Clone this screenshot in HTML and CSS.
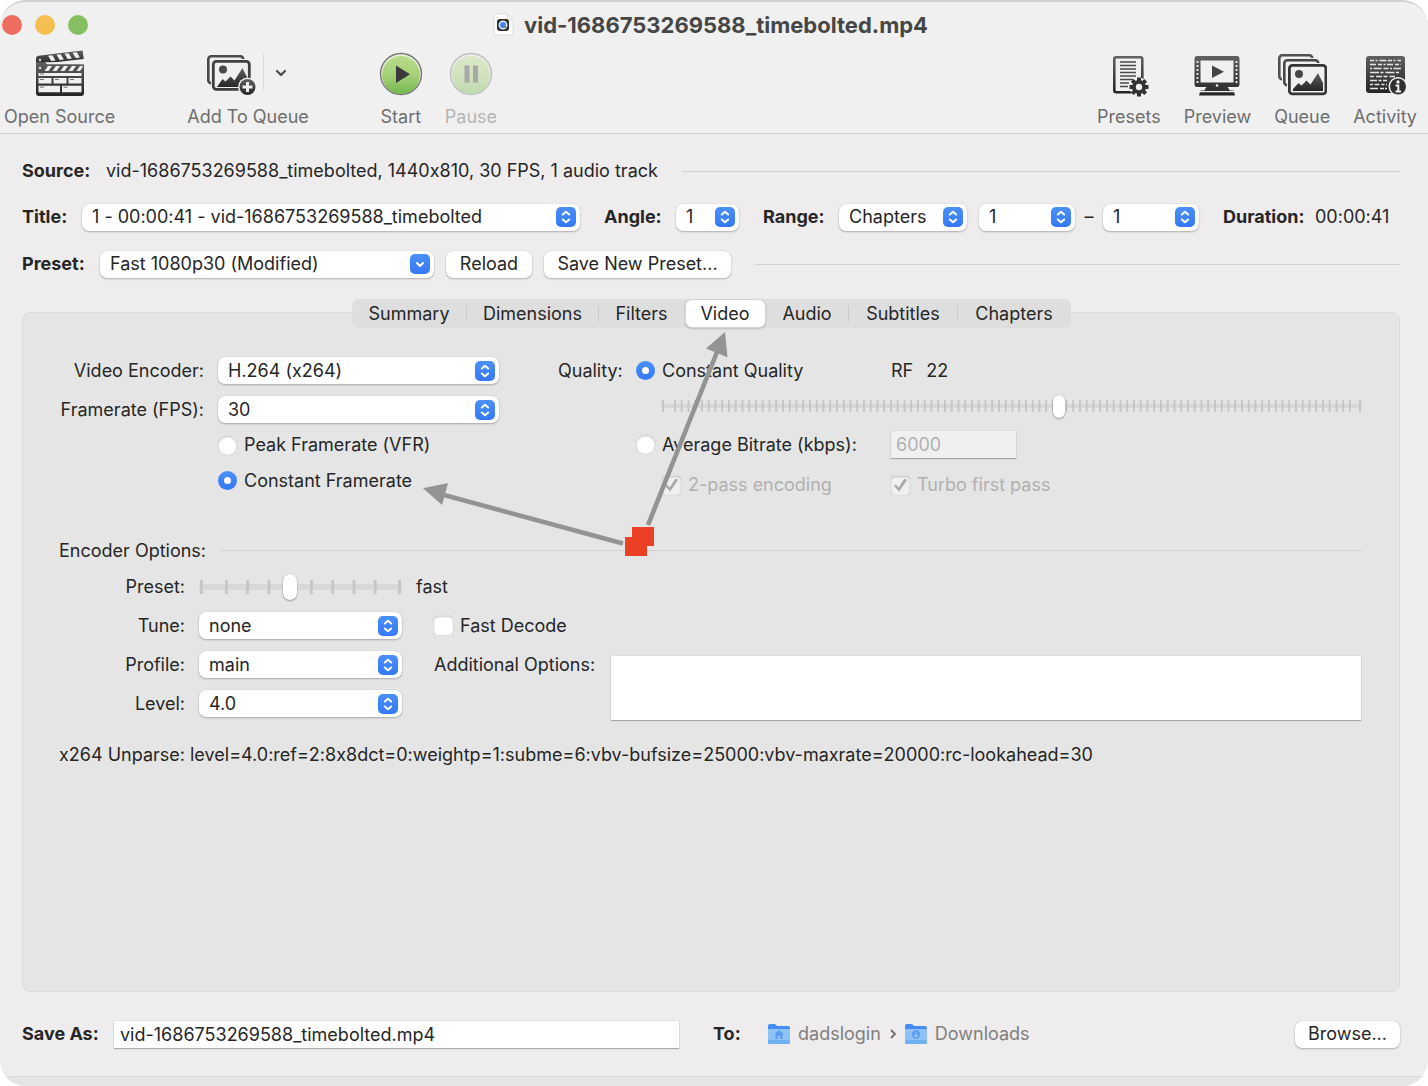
FILE: index.html
```html
<!DOCTYPE html>
<html lang="en">
<head>
<meta charset="utf-8">
<meta name="viewport" content="width=device-width, initial-scale=1">
<title>vid-1686753269588_timebolted.mp4</title>
<link rel="stylesheet" href="styles.css">
</head>
<body>
<svg class="defs" aria-hidden="true">
  <defs>
    <linearGradient id="ink" x1="0" y1="0" x2="0" y2="1"><stop offset="0" stop-color="#606060"/><stop offset="1" stop-color="#252525"/></linearGradient>
    <linearGradient id="green" x1="0" y1="0" x2="0" y2="1"><stop offset="0" stop-color="#b9dc8b"/><stop offset=".5" stop-color="#a6d077"/><stop offset="1" stop-color="#74b84e"/></linearGradient>
    <linearGradient id="blue" x1="0" y1="0" x2="0" y2="1"><stop offset="0" stop-color="#4a90f7"/><stop offset="1" stop-color="#3478f6"/></linearGradient>
    <symbol id="updown" viewBox="0 0 20 20"><rect width="20" height="20" rx="5" fill="url(#blue)"/><path d="M6.800 7.500 10 4.800l3.200 2.700M6.800 12.500 10 15.200l3.200-2.700" fill="none" stroke="#fff" stroke-width="2" stroke-linecap="round" stroke-linejoin="round"/></symbol>
    <symbol id="down" viewBox="0 0 20 20"><rect width="20" height="20" rx="5" fill="url(#blue)"/><path d="M7 9l3 3 3-3" fill="none" stroke="#fff" stroke-width="2" stroke-linecap="round" stroke-linejoin="round"/></symbol>
  </defs>
</svg>

<div class="window">
  <header class="chrome">
    <div class="titlebar">
      <div class="lights">
        <button class="light close" aria-label="Close"></button>
        <button class="light minimize" aria-label="Minimize"></button>
        <button class="light zoom" aria-label="Zoom"></button>
      </div>
      <h1 class="title">
        <svg width="22" height="24" viewBox="0 0 22 24" aria-hidden="true">
          <path d="M1 1h13l6 6v15H1z" fill="#fff" stroke="#dadada"/><path d="M14 1v6h6z" fill="#f4f4f4" stroke="#dedede"/>
          <rect x="4" y="6" width="12" height="12" rx="3" fill="#2c2c2e"/><circle cx="10" cy="12" r="4.500" fill="#dfe9f7"/><circle cx="10" cy="12" r="3" fill="#3d8af5"/><path d="M10 12l3 3" stroke="#777" stroke-width="1.500"/>
        </svg>
        <span>vid-1686753269588_timebolted.mp4</span>
      </h1>
    </div>

    <nav class="toolbar" aria-label="Toolbar">
      <button class="tool">
        <svg width="50" height="48" viewBox="0 0 50 48" aria-hidden="true">
          <path d="M1 8.500Q1 6 3.500 5.800L47.500 .5l1.300 8.500L9 13.500l5 1H1z" fill="url(#ink)"/>
          <path d="M13 5.800l4.500-.5 3 5.300-4.200.5zM21.500 4.800l4.200-.5 3.200 5.300-4.200.5zM29.500 3.800l4.200-.5 3.200 5.300-4.200.5zM37.500 2.800l4.200-.5 3.200 5.300-4.200.5z" fill="#f0f0f0"/>
          <path d="M1 12l48 2.200V43q0 3-3 3H4q-3 0-3-3z" fill="url(#ink)"/>
          <path d="M10 12.300h40v1.900H12z" fill="#f0f0f0"/>
          <path d="M13 16h4l-3.500 5h-4zM21 16h4l-3.500 5h-4zM29 16h4l-3.500 5h-4zM37 16h4l-3.500 5h-4zM45 16h2.500v1.500L45 21h-3.500z" fill="#f0f0f0"/>
          <path d="M3.500 23h43v3h-43zM3.500 28h13v5.500h-13zM18.500 28h13v5.500h-13zM33.500 28h13v5.500h-13zM3.500 35.800h21.500v6.500H3.500zM27 35.800h19.500v6.500H27z" fill="#f0f0f0"/>
          <path d="M5 24h4M5 29.500h4M20 29.500h4M35 29.500h4M5 37.200h4M28.500 37.200h4" stroke="#777"/>
          <circle cx="5" cy="10" r="1.200" fill="#ddd"/><circle cx="5" cy="18" r="1.200" fill="#ddd"/>
        </svg>
        <span>Open Source</span>
      </button>

      <button class="tool queue-add">
        <svg width="88" height="48" viewBox="0 0 88 48" aria-hidden="true">
          <rect x="4.300" y="6.300" width="35" height="27" rx="3" fill="#f0f0f0" stroke="#4a4a4a" stroke-width="2.600"/>
          <rect x="7" y="9" width="41" height="33" rx="3" fill="#f0f0f0"/>
          <rect x="9.300" y="11.300" width="36" height="28" rx="3" fill="#f0f0f0" stroke="#3f3f3f" stroke-width="2.800"/>
          <circle cx="19" cy="19.500" r="4" fill="#484848"/>
          <path d="M13 37l5.500-8 3 2.500 5-5 4 4L38.500 18 44 29v8z" fill="url(#ink)"/>
          <circle cx="43.500" cy="37" r="9.500" fill="#f0f0f0"/><circle cx="43.500" cy="37" r="8" fill="url(#ink)"/>
          <path d="M43.500 32v10M38.500 37h10" stroke="#f0f0f0" stroke-width="3"/>
          <path d="M59.500 4v36" stroke="#d9d9d9"/>
          <path d="M73 21l4 4 4-4" fill="none" stroke="#4b4b4b" stroke-width="2.200" stroke-linecap="round" stroke-linejoin="round"/>
        </svg>
        <span>Add To Queue</span>
      </button>

      <button class="tool start">
        <svg width="44" height="48" viewBox="0 0 44 48" aria-hidden="true">
          <circle cx="22" cy="24" r="20.500" fill="#e8f2dc" stroke="#747474" stroke-width="1.400"/><circle cx="22" cy="25" r="19" fill="url(#green)"/>
          <path d="M17 15.500v17.500l14-8.700z" fill="#3a3a3a"/>
        </svg>
        <span>Start</span>
      </button>

      <button class="tool pause" disabled>
        <svg width="44" height="48" viewBox="0 0 44 48" aria-hidden="true">
          <g opacity=".4"><circle cx="22" cy="24" r="20.500" fill="#e8f2dc" stroke="#747474" stroke-width="1.400"/><circle cx="22" cy="25" r="19" fill="url(#green)"/></g>
          <path d="M15.500 15.500h5v17h-5zM24 15.500h5v17h-5z" fill="#a8a8a8"/>
        </svg>
        <span>Pause</span>
      </button>

      <div class="spacer"></div>

      <button class="tool">
        <svg width="40" height="48" viewBox="0 0 40 48" aria-hidden="true">
          <rect x="5.300" y="7.300" width="28" height="35" rx="2" fill="#f0f0f0" stroke="url(#ink)" stroke-width="2.600"/>
          <path d="M11 12h16M11 15.500h16M11 19h16M11 22.500h16M11 26h16M11 29.500h13M11 33h9M11 36.500h8" stroke="#4b4b4b" stroke-width="1.500"/>
          <circle cx="30" cy="37" r="9.500" fill="#f0f0f0"/>
          <path d="M30 27.500v19M20.500 37h19M23.300 30.300l13.400 13.400M36.700 30.300L23.300 43.700" stroke="#333" stroke-width="4"/>
          <circle cx="30" cy="37" r="7" fill="#333"/><circle cx="30" cy="37" r="3.200" fill="#f0f0f0"/>
        </svg>
        <span>Presets</span>
      </button>

      <button class="tool">
        <svg width="46" height="48" viewBox="0 0 46 48" aria-hidden="true">
          <path d="M3 6h40q2.500 0 2.500 3v25q0 3-2.500 3H33.500l2 3h4l1.500 5.500H5L6.500 40h4l2-3H3Q.5 37 .5 34V9q0-3 2.500-3z" fill="url(#ink)"/>
          <path d="M5 40.500h36v1.700H5z" fill="#f0f0f0"/>
          <path d="M12 38.500h22l2 2.500H10z" fill="#333"/>
          <path d="M6.500 10.500h33v22h-33z" fill="#f0f0f0"/>
          <path d="M3.500 11v22M42.500 11v22" stroke="#f0f0f0" stroke-width="1.800" stroke-dasharray="2 2"/>
          <path d="M18 15.500v12.500l12-6.200z" fill="#444"/><circle cx="23" cy="35.500" r="1.300" fill="#eee"/>
        </svg>
        <span>Preview</span>
      </button>

      <button class="tool">
        <svg width="50" height="48" viewBox="0 0 50 48" aria-hidden="true">
          <rect x="2.300" y="5.300" width="33" height="24" rx="3" fill="#f0f0f0" stroke="#505050" stroke-width="2.600"/>
          <rect x="5" y="8" width="38" height="30" rx="3" fill="#f0f0f0"/>
          <rect x="7.300" y="10.300" width="34" height="25" rx="3" fill="#f0f0f0" stroke="#474747" stroke-width="2.600"/>
          <rect x="10" y="13" width="40" height="34" rx="3" fill="#f0f0f0"/>
          <rect x="12.400" y="15.400" width="36.500" height="28.500" rx="3" fill="#f0f0f0" stroke="#363636" stroke-width="2.800"/>
          <circle cx="22" cy="24" r="4" fill="#464646"/>
          <path d="M16 41v-2l5.500-6 3 2.500 5-5 4 4L41 23l5 10v8z" fill="url(#ink)"/>
        </svg>
        <span>Queue</span>
      </button>

      <button class="tool">
        <svg width="42" height="48" viewBox="0 0 42 48" aria-hidden="true">
          <rect x="2" y="6" width="39" height="37" rx="3" fill="url(#ink)"/>
          <g stroke="#e6e6e6" stroke-width="1.400" fill="none">
            <path d="M6 10.500h31" stroke-dasharray="4 1.500 2 2 7 1.500"/><path d="M6 14.500h31" stroke-dasharray="6 2 4 1.500 2 1.500"/>
            <path d="M6 18.500h31" stroke-dasharray="2 1.500 8 2 5 1.500"/><path d="M6 22.500h31" stroke-dasharray="9 1.500 3 2"/>
            <path d="M6 26.500h25" stroke-dasharray="4 2 6 1.500"/><path d="M6 30.500h17" stroke-dasharray="7 1.500 3 1.500"/>
            <path d="M6 34.500h17" stroke-dasharray="3 1.500 5 2"/><path d="M6 38.500h17" stroke-dasharray="8 2 4 1"/>
          </g>
          <circle cx="34" cy="36.500" r="9.500" fill="#f0f0f0"/><circle cx="34" cy="36.500" r="8" fill="#2f2f2f"/>
          <circle cx="34" cy="32" r="1.700" fill="#f0f0f0"/><path d="M31.500 35.500h2.800v6M31.500 41.500h5.500" fill="none" stroke="#f0f0f0" stroke-width="2"/>
        </svg>
        <span>Activity</span>
      </button>
    </nav>
  </header>

  <main class="content">
    <div class="row source">
      <strong class="lead">Source:</strong>
      <span>vid-1686753269588_timebolted, 1440x810, 30 FPS, 1 audio track</span>
      <hr class="rule">
    </div>

    <div class="row titles">
      <label class="lead" for="title">Title:</label>
      <div class="popup grow"><select id="title"><option>1 - 00:00:41 - vid-1686753269588_timebolted</option></select><svg><use href="#updown"/></svg></div>
      <label class="lead angle" for="angle">Angle:</label>
      <div class="popup tiny"><select id="angle"><option>1</option></select><svg><use href="#updown"/></svg></div>
      <label class="lead range" for="range">Range:</label>
      <div class="popup medium"><select id="range"><option>Chapters</option></select><svg><use href="#updown"/></svg></div>
      <div class="popup small"><select aria-label="First chapter"><option>1</option></select><svg><use href="#updown"/></svg></div>
      <span class="dash">–</span>
      <div class="popup small"><select aria-label="Last chapter"><option>1</option></select><svg><use href="#updown"/></svg></div>
      <strong class="lead duration">Duration:</strong>
      <span class="time">00:00:41</span>
    </div>

    <div class="row presets">
      <label class="lead" for="preset">Preset:</label>
      <div class="popup preset"><select id="preset"><option>Fast 1080p30 (Modified)</option></select><svg><use href="#down"/></svg></div>
      <button class="push reload">Reload</button>
      <button class="push save">Save New Preset...</button>
      <hr class="rule">
    </div>

    <div class="tabs" role="tablist">
      <button class="tab summary" role="tab">Summary</button>
      <button class="tab dimensions" role="tab">Dimensions</button>
      <button class="tab filters" role="tab">Filters</button>
      <button class="tab video" role="tab" aria-selected="true">Video</button>
      <button class="tab audio" role="tab">Audio</button>
      <button class="tab subtitles" role="tab">Subtitles</button>
      <button class="tab chapters" role="tab">Chapters</button>
    </div>

    <section class="panel" role="tabpanel">
      <div class="columns">
        <div class="encoder">
          <label class="name" for="encoder">Video Encoder:</label>
          <div class="popup"><select id="encoder"><option>H.264 (x264)</option></select><svg><use href="#updown"/></svg></div>
          <label class="name" for="fps">Framerate (FPS):</label>
          <div class="popup"><select id="fps"><option>30</option></select><svg><use href="#updown"/></svg></div>
          <label class="choice second"><input type="radio" name="rate">Peak Framerate (VFR)</label>
          <label class="choice second"><input type="radio" name="rate" checked>Constant Framerate</label>
        </div>

        <div class="quality">
          <span>Quality:</span>
          <label class="choice"><input type="radio" name="quality" checked>Constant Quality</label>
          <span class="rf"><span>RF</span><span>22</span></span>
          <div class="slider fine"><input type="range" aria-label="Constant quality" min="0" max="51" step="1" value="29"></div>
          <label class="choice second"><input type="radio" name="quality">Average Bitrate (kbps):</label>
          <input class="field bitrate" type="text" value="6000" aria-label="Average bitrate" disabled>
          <label class="choice second indent off"><input type="checkbox" checked disabled>2-pass encoding</label>
          <label class="choice off"><input type="checkbox" checked disabled>Turbo first pass</label>
        </div>
      </div>

      <div class="row heading">
        <span>Encoder Options:</span>
        <hr class="rule">
      </div>

      <div class="options">
        <label class="name" for="speed">Preset:</label>
        <div class="slider coarse"><input id="speed" type="range" min="0" max="9" value="4"></div>
        <span class="value">fast</span>
        <label class="name" for="tune">Tune:</label>
        <div class="popup"><select id="tune"><option>none</option></select><svg><use href="#updown"/></svg></div>
        <label class="choice extra"><input type="checkbox">Fast Decode</label>
        <label class="name" for="profile">Profile:</label>
        <div class="popup"><select id="profile"><option>main</option></select><svg><use href="#updown"/></svg></div>
        <label class="extra" for="additional">Additional Options:</label>
        <textarea class="field additional" id="additional"></textarea>
        <label class="name" for="level">Level:</label>
        <div class="popup"><select id="level"><option>4.0</option></select><svg><use href="#updown"/></svg></div>
      </div>

      <p class="unparse">x264 Unparse: level=4.0:ref=2:8x8dct=0:weightp=1:subme=6:vbv-bufsize=25000:vbv-maxrate=20000:rc-lookahead=30</p>

      <svg class="arrows" width="320" height="230" viewBox="420 330 320 230" aria-hidden="true">
        <g stroke="#939392" stroke-width="4.600"><path d="M648 525L717 352M623 543.500L444 495"/></g>
        <path d="M725 332l2.500 25.300L706 348.500zM423 488.300l25-5.300-6 22z" fill="#939392"/>
        <path d="M632 527h22v19h-7v10h-22v-19h7z" fill="#eb4025"/>
      </svg>
    </section>

    <div class="row destination">
      <label class="lead" for="saveas">Save As:</label>
      <input class="field filename" id="saveas" type="text" value="vid-1686753269588_timebolted.mp4">
      <strong class="lead to">To:</strong>
      <span class="path">
        <svg width="22" height="20" viewBox="0 0 22 20" aria-hidden="true"><path d="M0 2q0-2 2-2h5l2 2h11q2 0 2 2v14q0 2-2 2H2q-2 0-2-2z" fill="#448df4"/><path d="M0 5h22v13q0 2-2 2H2q-2 0-2-2z" fill="#8fc3f8"/><path d="M0 16h22v2q0 2-2 2H2q-2 0-2-2z" fill="#6fb0f5"/><path d="M6 10.500L11 6l5 4.500h-1.500V15h-2.300v-3H9.800v3H7.500v-4.500z" fill="#5a9df0"/></svg>
        <span>dadslogin</span>
        <svg width="8" height="10" viewBox="0 0 8 10" aria-hidden="true"><path d="M2 1l4 4-4 4" fill="none" stroke="#6f6f6f" stroke-width="1.800"/></svg>
        <svg width="22" height="20" viewBox="0 0 22 20" aria-hidden="true"><path d="M0 2q0-2 2-2h5l2 2h11q2 0 2 2v14q0 2-2 2H2q-2 0-2-2z" fill="#448df4"/><path d="M0 5h22v13q0 2-2 2H2q-2 0-2-2z" fill="#8fc3f8"/><path d="M0 16h22v2q0 2-2 2H2q-2 0-2-2z" fill="#6fb0f5"/><circle cx="11" cy="10.500" r="4.200" fill="#5a9df0"/><path d="M11 8v4.500M9 11l2 2 2-2" fill="none" stroke="#8fc3f8" stroke-width="1.200"/></svg>
        <span>Downloads</span>
      </span>
      <button class="push browse">Browse...</button>
    </div>
  </main>
  <footer class="status"></footer>
</div>
</body>
</html>
```
FILE: styles.css
```css
* { box-sizing: border-box; }

body {
  margin: 0;
  background: #fff;
  color: #262626;
  font: 18px/22px Inter, "Liberation Sans", sans-serif;
  font-feature-settings: "calt" 0;
}

button, select, input, textarea {
  margin: 0;
  font: inherit;
  font-feature-settings: inherit;
  color: inherit;
}

.defs { position: absolute; width: 0; height: 0; }

.window {
  display: flex;
  flex-direction: column;
  min-height: 100vh;
  overflow: hidden;
  border-top: 2px solid #cfcfcf;
  border-radius: 26px;
  background: #eeeced;
}

/* Title bar and toolbar */
.chrome {
  border-bottom: 1px solid #d0d0d0;
  background: #f0f0f0;
}

.titlebar {
  display: grid;
  grid-template-columns: 1fr auto 1fr;
  align-items: center;
  height: 46px;
  padding: 0 9px 0 2px;
}

.lights { display: flex; gap: 13px; }

.light {
  width: 20px;
  height: 20px;
  padding: 0;
  border: 0;
  border-radius: 50%;
}

.close { background: #ec6d5f; }
.minimize { background: #f4be50; }
.zoom { background: #85bf62; }

.title {
  display: flex;
  align-items: center;
  gap: 9px;
  margin: 0;
  color: #464646;
  font-size: 22px;
  font-weight: 700;
  line-height: 26px;
}

.toolbar {
  display: flex;
  height: 85px;
  padding: 2px 11px 0 4px;
}

.tool {
  display: grid;
  flex: none;
  grid-template-rows: 48px 38px;
  justify-items: center;
  align-items: center;
  padding: 0;
  border: 0;
  background: none;
  color: #6e6e6e;
  white-space: nowrap;
}

.tool + .tool { margin-left: 23px; }
.tool.queue-add { margin-left: 72px; }
.tool.start { margin-left: 70px; }
.tool.pause { margin-left: 22px; color: #b5b5b5; }
.spacer { flex: 1; }

/* Shared controls */
.content {
  display: flex;
  flex: 1;
  flex-direction: column;
  padding: 14px 28px 0 22px;
}

.row { display: flex; align-items: center; }
.lead { flex: none; font-weight: 700; }
.row > span { white-space: nowrap; }

.rule {
  flex: 1;
  height: 1px;
  margin: 0;
  border: 0;
  background: #d2d1d1;
}

.popup { display: grid; align-items: center; }
.popup > * { grid-area: 1 / 1; }

.popup select {
  width: 100%;
  min-width: 0;
  height: 27px;
  padding: 0 34px 0 10px;
  border: 0;
  border-radius: 7px;
  appearance: none;
  background: #fff;
  box-shadow: 0 1px 2px #00000040, 0 0 1px #00000030;
}

.popup svg {
  justify-self: end;
  width: 20px;
  height: 20px;
  margin-right: 4px;
  pointer-events: none;
}

.push {
  flex: none;
  height: 27px;
  padding: 0;
  border: 0;
  border-radius: 7px;
  background: #fff;
  box-shadow: 0 1px 2px #00000040, 0 0 1px #00000030;
}

.field {
  border: 0;
  border-radius: 0;
  background: #fff;
  box-shadow: 0 1px 1px #00000040, 0 0 1px #00000030;
}

.choice { display: flex; align-items: center; white-space: nowrap; }

.choice input {
  display: grid;
  flex: none;
  place-items: center;
  width: 19px;
  height: 19px;
  margin-right: 7px;
  appearance: none;
  background: #fff;
  box-shadow: inset 0 1px 2px #00000030, 0 0 1px #00000040;
}

.choice input[type="radio"] { border-radius: 50%; }
.choice input[type="checkbox"] { border-radius: 4px; }

.choice input[type="radio"]:checked {
  background: linear-gradient(#4a90f7, #3478f6);
  box-shadow: none;
}

.choice input[type="radio"]:checked::before {
  width: 7px;
  height: 7px;
  border-radius: 50%;
  background: #fff;
  content: "";
}

.choice input[type="checkbox"]:disabled { background: #f0f0f0; }

.choice input[type="checkbox"]:checked::before {
  width: 13px;
  height: 13px;
  background: #a9a9a9;
  clip-path: polygon(0 58%, 14% 46%, 36% 70%, 80% 0, 100% 12%, 40% 100%);
  content: "";
}

.off { color: #b0b0b0; }

.slider { display: grid; align-items: center; }
.slider::before, .slider input { grid-area: 1 / 1; }

.slider input {
  width: 100%;
  height: 28px;
  appearance: none;
  background: none;
}

.slider input::-webkit-slider-thumb {
  width: 14px;
  height: 26px;
  border-radius: 7px;
  appearance: none;
  background: #fff;
  box-shadow: 0 1px 2px #00000050, 0 0 1px #00000040;
}

/* End marks, inner marks, then the groove */
.slider::before {
  height: 14px;
  background:
    linear-gradient(#c6c6c6, #c6c6c6) 1px 0 / var(--mark) 100% no-repeat border-box,
    linear-gradient(#c6c6c6, #c6c6c6) right 1px top 0 / var(--mark) 100% no-repeat border-box,
    linear-gradient(90deg, #c6c6c6 var(--mark), transparent var(--mark)) 0 0 / calc((100% + 4px) / var(--marks)) 100% repeat-x content-box,
    linear-gradient(#d8d8d8, #d8d8d8) 0 center / 100% var(--groove) no-repeat border-box;
  content: "";
}

.coarse::before { --mark: 3px; --marks: 8; --groove: 6px; padding: 0 11px 0 26px; }
.fine::before { --mark: 2px; --marks: 101; --groove: 4px; height: 12px; padding: 0 9px 0 13px; }
.slider.fine input::-webkit-slider-thumb { width: 12px; height: 23px; }

/* Source, title and preset rows */
.source { height: 46px; }
.source .lead { width: 84px; }
.source .rule { margin-left: 24px; }

.titles { height: 46px; }
.titles .lead { width: 60px; }
.titles .grow { flex: 1; }
.titles .angle { width: 72px; margin-left: 24px; }
.titles .range { width: 76px; margin-left: 24px; }
.titles .duration { width: 92px; margin-left: 24px; }
.time { width: 85px; }
.tiny { width: 63px; }
.medium { width: 128px; margin-right: 12px; }
.small { width: 96px; }
.dash { width: 28px; text-align: center; }

.presets { height: 48px; gap: 12px; }
.presets .lead { width: 66px; }
.preset { width: 334px; }
.reload { width: 86px; }
.save { width: 187px; }
.presets .rule { margin-left: 12px; }

/* Tab bar straddles the top edge of the panel */
.tabs {
  z-index: 1;
  display: flex;
  align-self: center;
  height: 29px;
  margin: 11px 0 -16px;
  border-radius: 7px;
  background: #dedede;
}

.tab {
  position: relative;
  padding: 0;
  border: 0;
  border-radius: 7px;
  background: none;
}

.summary { width: 115px; }
.dimensions { width: 132px; }
.filters { width: 86px; }
.video { width: 81px; }
.audio { width: 83px; }
.subtitles { width: 109px; }
.chapters { width: 113px; }

.tab[aria-selected="true"] {
  border: 1px solid #d4d4d4;
  background: #fff;
  box-shadow: 0 1px 2px #00000030;
}

.summary::after, .dimensions::after, .audio::after, .subtitles::after {
  position: absolute;
  top: 7px;
  right: 0;
  width: 1px;
  height: 16px;
  background: #cacaca;
  content: "";
}

.panel {
  position: relative;
  flex: 1;
  padding: 38px 37px 0 36px;
  border: 1px solid #dcdcdc;
  border-radius: 8px;
  background: #e5e5e5;
}

.columns { display: flex; gap: 59px; }
.name { text-align: right; white-space: nowrap; }

.encoder {
  display: grid;
  flex: none;
  grid-template-columns: 145px 281px;
  grid-template-rows: 39px 39px 32px 39px;
  column-gap: 14px;
  align-items: center;
}

.second { grid-column: 2; }

.quality {
  display: grid;
  flex: 1;
  grid-template-columns: 78px 255px 1fr;
  grid-template-rows: 39px 32px 45px 36px;
  align-items: center;
}

.rf { display: flex; gap: 13px; }
.fine { grid-column: 2 / 4; margin-left: 25px; }
.indent { margin-left: 26px; }

.bitrate {
  width: 125px;
  height: 27px;
  padding: 0 5px;
  color: #b0b0b0;
  background: #f0f0f0;
}

.heading { height: 33px; margin-top: 31px; gap: 14px; }

.options {
  display: grid;
  grid-template-columns: 126px 203px 162px 1fr;
  grid-auto-rows: 39px;
  column-gap: 14px;
  align-items: center;
}

.value { grid-column: 3 / 5; }
.extra { margin-left: 18px; white-space: nowrap; }
.choice.extra { grid-column: 3 / 5; }

.additional {
  grid-row: 3 / 5;
  grid-column: 4;
  align-self: start;
  height: 64px;
  margin: 11px 1px 0 19px;
  resize: none;
}

.unparse { margin: 21px 0 0; }

.arrows {
  position: absolute;
  top: 17px;
  left: 397px;
  pointer-events: none;
}

.destination { height: 84px; }
.destination .lead { width: 92px; }
.filename { flex: 0 1 565px; min-width: 0; height: 27px; padding: 0 6px; }
.destination .to { width: 55px; margin-left: 34px; }
.path { display: flex; flex: 1; align-items: center; gap: 8px; color: #7f7f7f; }
.browse { width: 105px; }

.status {
  height: 10px;
  border-top: 1px solid #d9d8d8;
  background: #e5e5e5;
}
```
